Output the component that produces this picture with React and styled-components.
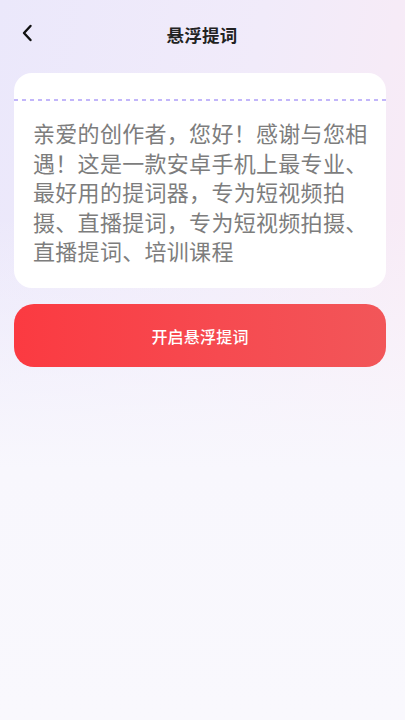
import React from "react";
import styled, { createGlobalStyle } from "styled-components";

const GlobalStyle = createGlobalStyle`
  html, body {
    margin: 0;
    padding: 0;
  }
  body {
    font-family: "Noto Sans CJK SC", "Noto Sans", sans-serif;
  }
`;

const Page = styled.div`
  width: 405px;
  height: 720px;
  overflow: hidden;
  box-sizing: border-box;
  padding: 0 19px 0 14px;
  background:
    linear-gradient(180deg, rgba(247, 246, 253, 0) 0%, rgba(247, 246, 253, 0) 30%, #f8f7fd 65%, #f9f8fd 100%),
    linear-gradient(100deg, #ebe8fb 0%, #f1ebfa 50%, #fbebf4 100%);
`;

const Header = styled.div`
  height: 68px;
  display: flex;
  align-items: center;
  justify-content: center;
  position: relative;
`;

const Back = styled.button`
  position: absolute;
  left: 3px;
  top: 23px;
  width: 20px;
  height: 20px;
  padding: 0;
  border: none;
  background: none;
  display: flex;
  align-items: center;
  justify-content: center;
`;

const Title = styled.h1`
  margin: 0;
  font-size: 17.5px;
  font-weight: 700;
  color: #222;
  letter-spacing: 0.3px;
  transform: translateX(2px);
`;

const Card = styled.div`
  margin-top: 5px;
  background: #fff;
  border-radius: 18px;
  height: 215px;
  box-sizing: border-box;
  padding-top: 26px;
`;

const Dashed = styled.div`
  height: 2px;
  background-image: linear-gradient(90deg, #c2b6fa 50%, transparent 50%);
  background-size: 8px 2px;
  background-repeat: repeat-x;
`;

const Script = styled.p`
  margin: 0;
  padding: 17px 18px 0 19px;
  font-size: 22px;
  line-height: 29.5px;
  color: #7d7d7d;
  letter-spacing: 0.3px;
`;

const StartButton = styled.button`
  margin-top: 16px;
  width: 100%;
  height: 63px;
  border: none;
  border-radius: 20px;
  background: linear-gradient(90deg, #fb3a41 0%, #f64a50 55%, #f25659 100%);
  color: #fff;
  font-family: inherit;
  font-size: 16px;
  font-weight: 500;
  letter-spacing: 0.2px;
`;

export default function App() {
  return (
    <>
      <GlobalStyle />
      <Page>
        <Header>
          <Back aria-label="back">
            <svg width="12" height="18" viewBox="0 0 12 18">
              <path d="M9.5 2 L3 9 L9.5 16" fill="none" stroke="#111" strokeWidth="2.4" strokeLinecap="round" strokeLinejoin="round" />
            </svg>
          </Back>
          <Title>悬浮提词</Title>
        </Header>
        <Card>
          <Dashed />
          <Script>
            亲爱的创作者，您好！感谢与您相遇！这是一款安卓手机上最专业、最好用的提词器，专为短视频拍摄、直播提词，专为短视频拍摄、直播提词、培训课程
          </Script>
        </Card>
        <StartButton>开启悬浮提词</StartButton>
      </Page>
    </>
  );
}
